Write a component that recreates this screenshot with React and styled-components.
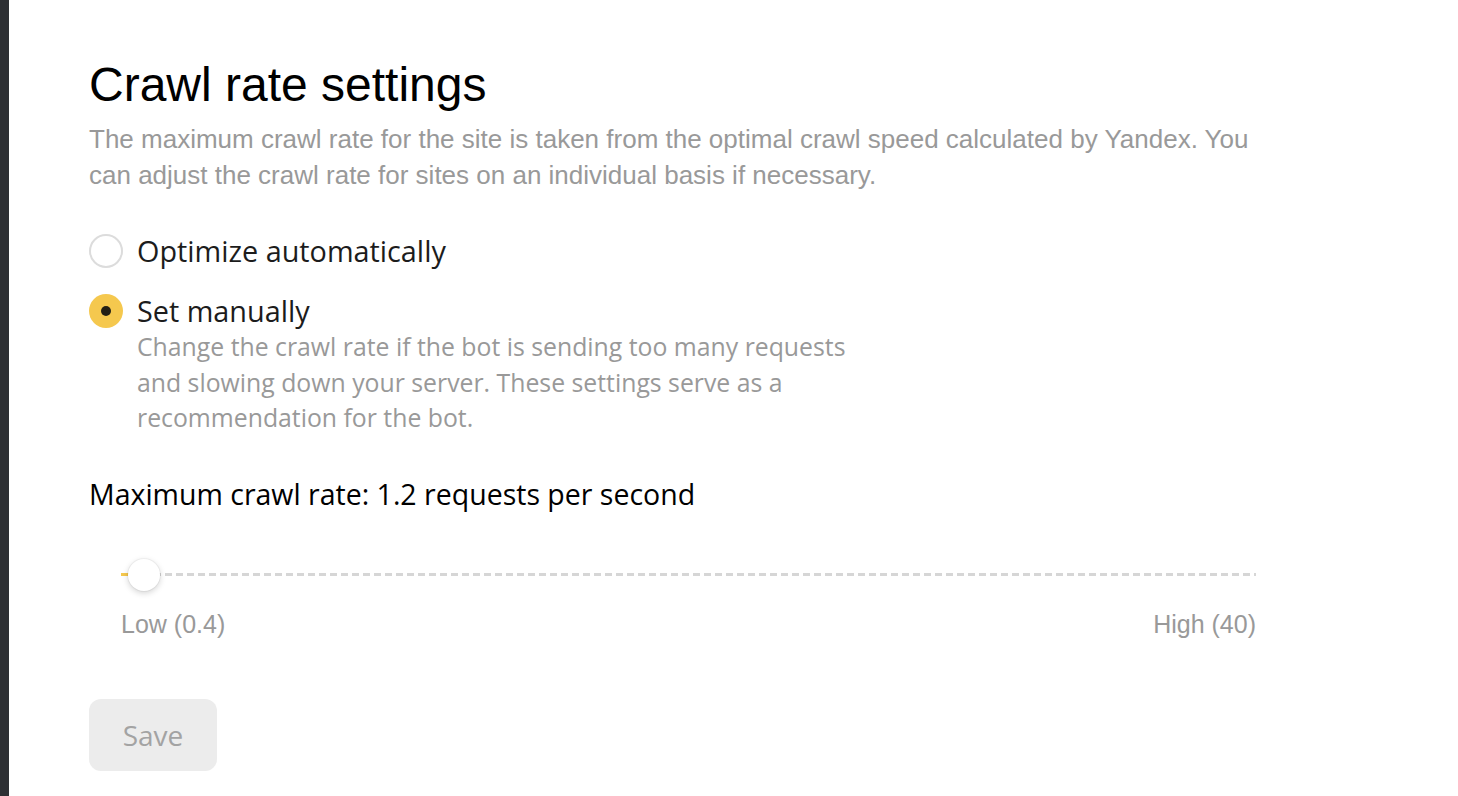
import React, { useState } from "react";
import styled, { createGlobalStyle } from "styled-components";

const GlobalStyle = createGlobalStyle`
  html, body { margin: 0; padding: 0; background: #fff; }
  body { font-family: "Liberation Sans", Arial, sans-serif; }
  * { box-sizing: border-box; }
`;

const Page = styled.div`
  display: flex;
  min-height: 100vh;
  background: #fff;
`;

const Sidebar = styled.div`
  width: 9px;
  flex: none;
  background: #2e3034;
`;

const Main = styled.main`
  flex: 1;
  padding: 57px 0 0 80px;
`;

const Content = styled.div`
  width: 1170px;
  display: flex;
  flex-direction: column;
`;

const Title = styled.h1`
  margin: 0;
  font-family: "Liberation Sans", Arial, sans-serif;
  font-weight: 400;
  font-size: 48px;
  line-height: 56px;
  color: #000;
`;

const Lead = styled.p`
  margin: 8px 0 0;
  font-family: "Liberation Sans", Arial, sans-serif;
  font-size: 26px;
  line-height: 36px;
  color: #999;
`;

const RadioGroup = styled.div`
  display: flex;
  flex-direction: column;
  gap: 24px;
  margin-top: 40px;
`;

const RadioRow = styled.label`
  display: grid;
  grid-template-columns: 34px 1fr;
  column-gap: 14px;
  align-items: center;
  cursor: pointer;
`;

const RadioCircle = styled.span`
  width: 34px;
  height: 34px;
  border-radius: 50%;
  display: flex;
  align-items: center;
  justify-content: center;
  background: ${(p) => (p.$checked ? "#f5c84e" : "#fff")};
  border: ${(p) => (p.$checked ? "none" : "2px solid #dcdcdc")};
  &::after {
    content: "";
    width: 10px;
    height: 10px;
    border-radius: 50%;
    background: #231f14;
    display: ${(p) => (p.$checked ? "block" : "none")};
  }
`;

const RadioLabel = styled.span`
  font-family: "Open Sans", "Noto Sans", sans-serif;
  font-size: 28.8px;
  line-height: 36px;
  color: #1c1c1c;
`;

const RadioHint = styled.p`
  grid-column: 2;
  margin: 0;
  max-width: 745px;
  font-family: "Open Sans", "Noto Sans", sans-serif;
  font-size: 24.8px;
  line-height: 35.5px;
  color: #999;
`;

const RateTitle = styled.div`
  margin-top: 40px;
  font-family: "Open Sans", "Noto Sans", sans-serif;
  font-size: 28.5px;
  line-height: 36px;
  color: #000;
`;

const SliderBlock = styled.div`
  margin: 47px 0 0 32px;
  width: 1135px;
`;

const Track = styled.div`
  position: relative;
  height: 32px;
`;

const Rail = styled.div`
  position: absolute;
  left: 0;
  right: 0;
  top: 14px;
  height: 3.5px;
  background: repeating-linear-gradient(
    to right,
    #d6d6d6 0 7px,
    transparent 7px 11px
  );
`;

const Fill = styled.div`
  position: absolute;
  left: 0;
  top: 14px;
  height: 3.5px;
  background: #f5c84e;
`;

const Thumb = styled.div`
  position: absolute;
  top: 0;
  width: 32px;
  height: 32px;
  margin-left: -16px;
  border-radius: 50%;
  background: #fff;
  box-shadow: 0 2px 6px rgba(0, 0, 0, 0.18), 0 0 0 1px rgba(0, 0, 0, 0.04);
`;

const Scale = styled.div`
  display: flex;
  justify-content: space-between;
  margin-top: 17px;
  font-family: "Liberation Sans", Arial, sans-serif;
  font-size: 25px;
  line-height: 32px;
  color: #999;
`;

const SaveButton = styled.button`
  margin-top: 59px;
  width: 128px;
  height: 72px;
  border: none;
  border-radius: 12px;
  background: #ececec;
  color: #a3a3a3;
  font-family: "Open Sans", "Noto Sans", sans-serif;
  font-size: 28px;
  cursor: default;
  align-self: flex-start;
`;

const MIN = 0.4;
const MAX = 40;

export default function App() {
  const [mode, setMode] = useState("manual");
  const value = 1.2;
  const pct = ((value - MIN) / (MAX - MIN)) * 100;

  return (
    <>
      <GlobalStyle />
      <Page>
        <Sidebar />
        <Main>
          <Content>
            <Title>Crawl rate settings</Title>
            <Lead>
              The maximum crawl rate for the site is taken from the optimal crawl speed
              calculated by Yandex. You can adjust the crawl rate for sites on an
              individual basis if necessary.
            </Lead>
            <RadioGroup>
              <RadioRow onClick={() => setMode("auto")}>
                <RadioCircle $checked={mode === "auto"} />
                <RadioLabel>Optimize automatically</RadioLabel>
              </RadioRow>
              <RadioRow onClick={() => setMode("manual")}>
                <RadioCircle $checked={mode === "manual"} />
                <RadioLabel>Set manually</RadioLabel>
                <RadioHint>
                  Change the crawl rate if the bot is sending too many requests and
                  slowing down your server. These settings serve as a recommendation
                  for the bot.
                </RadioHint>
              </RadioRow>
            </RadioGroup>
            <RateTitle>Maximum crawl rate: 1.2 requests per second</RateTitle>
            <SliderBlock>
              <Track>
                <Rail />
                <Fill style={{ width: `${pct}%` }} />
                <Thumb style={{ left: `${pct}%` }} />
              </Track>
              <Scale>
                <span>Low (0.4)</span>
                <span>High (40)</span>
              </Scale>
            </SliderBlock>
            <SaveButton disabled>Save</SaveButton>
          </Content>
        </Main>
      </Page>
    </>
  );
}
